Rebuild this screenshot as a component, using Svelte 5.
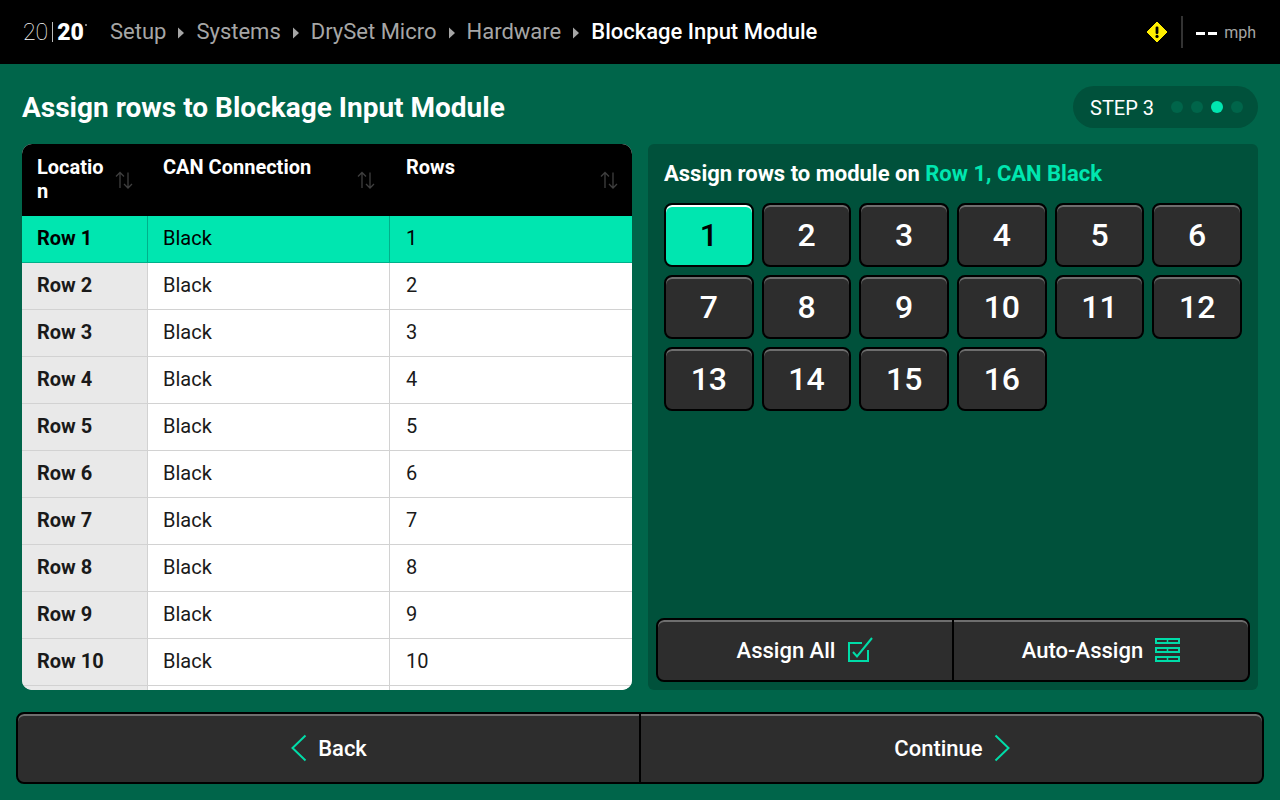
<script>
    const crumbs = ['Setup', 'Systems', 'DrySet Micro', 'Hardware'];
    const columns = ['Location', 'CAN Connection', 'Rows'];
    const rows = Array.from({ length: 11 }, (_, i) => i + 1);
    const keys = Array.from({ length: 16 }, (_, i) => i + 1);
    const steps = [1, 2, 3, 4];

    let selected = 1;
</script>

<div class="page">
    <header class="topbar">
        <div class="logo">
            <span class="logo-thin">20</span><span class="logo-bar"></span><span class="logo-bold">20</span><span class="logo-dot"></span>
        </div>
        <nav class="crumbs">
            {#each crumbs as crumb}
                <span>{crumb}</span>
                <svg class="caret" width="8" height="12" viewBox="0 0 8 12"><path d="M1 0.5 L7 6 L1 11.5 Z" fill="#a6a6a6" /></svg>
            {/each}
            <span class="current">Blockage Input Module</span>
        </nav>
        <div class="status">
            <svg width="22" height="22" viewBox="0 0 22 22">
                <path d="M11 1 L21 11 L11 21 L1 11 Z" fill="#ffee00" stroke="#ffee00" stroke-linejoin="round" />
                <rect x="9.6" y="5.5" width="2.8" height="7.5" rx="1.2" fill="#000" />
                <circle cx="11" cy="15.4" r="1.6" fill="#000" />
            </svg>
            <span class="divider"></span>
            <span class="dash"></span><span class="dash"></span>
            <span class="unit">mph</span>
        </div>
    </header>

    <div class="title-row">
        <h1>Assign rows to Blockage Input Module</h1>
        <div class="step">
            <span class="step-label">STEP 3</span>
            <div class="dots">
                {#each steps as s}
                    <span class="dot" class:on={s === 3}></span>
                {/each}
            </div>
        </div>
    </div>

    <main class="content">
        <div class="table-wrap">
            <table>
                <colgroup>
                    <col style="width: 125px" />
                    <col style="width: 242px" />
                    <col style="width: 243px" />
                </colgroup>
                <thead>
                    <tr>
                        {#each columns as col}
                            <th>
                                <div class="th-inner">
                                    <span class="th-label">{col}</span>
                                    <svg class="sort" width="18" height="18" viewBox="0 0 18 18" fill="none" stroke="#3f3f3f" stroke-width="1.3">
                                        <path d="M5 17 V1.5 M1 5.5 L5 1.5 L9 5.5" />
                                        <path d="M13 1.5 V17 M9 13 L13 17 L17 13" />
                                    </svg>
                                </div>
                            </th>
                        {/each}
                    </tr>
                </thead>
                <tbody>
                    {#each rows as r}
                        <tr class:active={r === selected}>
                            <td class="loc">Row {r}</td>
                            <td>Black</td>
                            <td>{r}</td>
                        </tr>
                    {/each}
                </tbody>
            </table>
        </div>

        <section class="panel">
            <h2>Assign rows to module on <em>Row 1, CAN Black</em></h2>
            <div class="keys">
                {#each keys as k}
                    <button class="btn key" class:active={k === selected}>{k}</button>
                {/each}
            </div>
            <div class="btn-group actions">
                <button class="btn">
                    Assign All
                    <svg width="26" height="26" viewBox="0 0 26 26" fill="none" stroke="#00dca8" stroke-width="2">
                        <path d="M21 13 V24 H2 V6 H15" />
                        <path d="M6 15 L10 19.5 L25 1" />
                    </svg>
                </button>
                <button class="btn">
                    Auto-Assign
                    <svg width="25" height="26" viewBox="0 0 25 26" fill="none" stroke="#00dca8" stroke-width="2">
                        <rect x="1" y="2" width="23" height="4" />
                        <rect x="1" y="11" width="23" height="4" />
                        <rect x="1" y="20" width="23" height="4" />
                        <path d="M12.5 2 V6 M12.5 11 V15 M12.5 20 V24" stroke-width="1.5" />
                    </svg>
                </button>
            </div>
        </section>
    </main>

    <footer class="btn-group nav">
        <button class="btn">
            <svg width="18" height="28" viewBox="0 0 18 28" fill="none" stroke="#00dca8" stroke-width="2"><path d="M15.5 1.5 L2.5 14 L15.5 26.5" /></svg>
            <span>Back</span>
        </button>
        <button class="btn">
            <span class="continue">Continue</span>
            <svg width="18" height="28" viewBox="0 0 18 28" fill="none" stroke="#00dca8" stroke-width="2"><path d="M2.5 1.5 L15.5 14 L2.5 26.5" /></svg>
        </button>
    </footer>
</div>

<style>
    :global(body) {
        margin: 0;
        background: #00654a;
    }

    .page {
        width: 1280px;
        height: 800px;
        display: flex;
        flex-direction: column;
        overflow: hidden;
        background: #00654a;
        color: #fff;
        font-family: Roboto, "Liberation Sans", sans-serif;
    }

    /* top bar */
    .topbar {
        height: 64px;
        flex: none;
        display: flex;
        align-items: center;
        padding: 0 24px 0 23px;
        background: #000;
    }

    .logo {
        display: flex;
        align-items: center;
        width: 87px;
        font-size: 23px;
    }

    .logo-thin {
        font-weight: 100;
    }

    .logo-bar {
        width: 1px;
        height: 20px;
        margin: 0 4px;
        background: #bbb;
    }

    .logo-bold {
        font-weight: 900;
    }

    .logo-dot {
        width: 2px;
        height: 2px;
        margin: -14px 0 0 1px;
        border-radius: 50%;
        background: #aaa;
    }

    .crumbs {
        display: flex;
        align-items: center;
        gap: 11px;
        margin-top: -2px;
        font-size: 22px;
        color: #a6a6a6;
    }

    .caret {
        margin-top: 3px;
    }

    .current {
        color: #fff;
        font-weight: 500;
    }

    .status {
        margin-left: auto;
        display: flex;
        align-items: center;
    }

    .divider {
        width: 2px;
        height: 32px;
        margin: 0 13px 0 13px;
        background: #333;
    }

    .dash {
        width: 9px;
        height: 3px;
        margin: 2px 3px 0 0;
        background: #fff;
    }

    .unit {
        margin-left: 4px;
        font-size: 16px;
        color: #a6a6a6;
    }

    /* title */
    .title-row {
        height: 74px;
        flex: none;
        display: flex;
        align-items: center;
        justify-content: space-between;
        padding: 6px 22px 0;
    }

    h1 {
        margin: 0;
        font-size: 28px;
        font-weight: 700;
    }

    .step {
        display: flex;
        align-items: center;
        gap: 17px;
        height: 42px;
        padding: 0 15px 0 17px;
        border-radius: 21px;
        background: #00513b;
        font-size: 20px;
    }

    .step-label {
        padding-top: 1px;
    }

    .dots {
        display: flex;
        gap: 8px;
    }

    .dot {
        width: 12px;
        height: 12px;
        border-radius: 50%;
        background: #00654a;
    }

    .dot.on {
        background: #00e6b0;
    }

    /* main */
    .content {
        flex: none;
        height: 546px;
        display: flex;
        gap: 16px;
        padding: 0 22px;
    }

    .table-wrap {
        width: 610px;
        height: 546px;
        flex: none;
        overflow: hidden;
        border-radius: 10px;
        background: #fff;
    }

    table {
        width: 610px;
        table-layout: fixed;
        border-collapse: separate;
        border-spacing: 0;
        font-size: 20px;
        color: #1a1a1a;
    }

    th {
        height: 72px;
        padding: 11px 14px 0 16px;
        box-sizing: border-box;
        vertical-align: top;
        text-align: left;
        background: #000;
        color: #fff;
        font-size: 20px;
        font-weight: 700;
        line-height: 24px;
    }

    th:first-child {
        padding-left: 15px;
    }

    th:last-child {
        padding-left: 17px;
    }

    .th-inner {
        display: flex;
        justify-content: space-between;
        gap: 4px;
    }

    .th-label {
        flex: 1;
        min-width: 0;
        word-break: break-all;
    }

    .sort {
        flex: none;
        margin-top: 16px;
    }

    td {
        height: 47px;
        padding: 0 0 2px 15px;
        box-sizing: border-box;
        background: #fff;
        border-bottom: 1px solid #d2d2d2;
        border-left: 1px solid #d2d2d2;
    }

    td:last-child {
        padding-left: 16px;
    }

    td.loc {
        border-left: 0;
        background: #e9e9e9;
        font-weight: 700;
    }

    tr.active td {
        background: #00e6b0;
        color: #000;
        border-color: #00b08a;
    }

    /* right panel */
    .panel {
        width: 610px;
        flex: none;
        box-sizing: border-box;
        display: flex;
        flex-direction: column;
        padding: 0 8px 8px;
        border-radius: 6px;
        background: #00513b;
    }

    h2 {
        margin: 0;
        padding: 17px 8px 0;
        font-size: 22px;
        line-height: 26px;
        font-weight: 700;
    }

    h2 em {
        font-style: normal;
        color: #00e6b0;
    }

    .keys {
        display: grid;
        grid-template-columns: repeat(6, 1fr);
        grid-auto-rows: 64px;
        gap: 8px;
        margin: 16px 8px 0;
    }

    .btn {
        display: flex;
        align-items: center;
        justify-content: center;
        gap: 12px;
        padding: 0;
        box-sizing: border-box;
        border: 2px solid #000;
        border-radius: 8px;
        background: #2d2d2d;
        box-shadow: inset 0 2px 0 #6e6e6e;
        color: #fff;
        font-family: inherit;
        font-size: 22px;
        font-weight: 500;
    }

    .key {
        font-size: 32px;
    }

    .key.active {
        background: #00e6b0;
        box-shadow: inset 0 2px 0 #fff;
        color: #000;
    }

    .btn-group {
        display: flex;
    }

    .btn-group .btn {
        flex: 1;
    }

    .btn-group .btn:first-child {
        border-radius: 8px 0 0 8px;
        border-right: 1px solid #000;
    }

    .btn-group .btn:last-child {
        border-radius: 0 8px 8px 0;
        border-left: 1px solid #000;
    }

    .actions {
        height: 64px;
        margin-top: auto;
    }

    .nav {
        height: 72px;
        flex: none;
        margin: 22px 16px 0;
    }

    .nav .btn {
        gap: 10px;
    }

    .continue {
        margin-left: 2px;
    }
</style>
